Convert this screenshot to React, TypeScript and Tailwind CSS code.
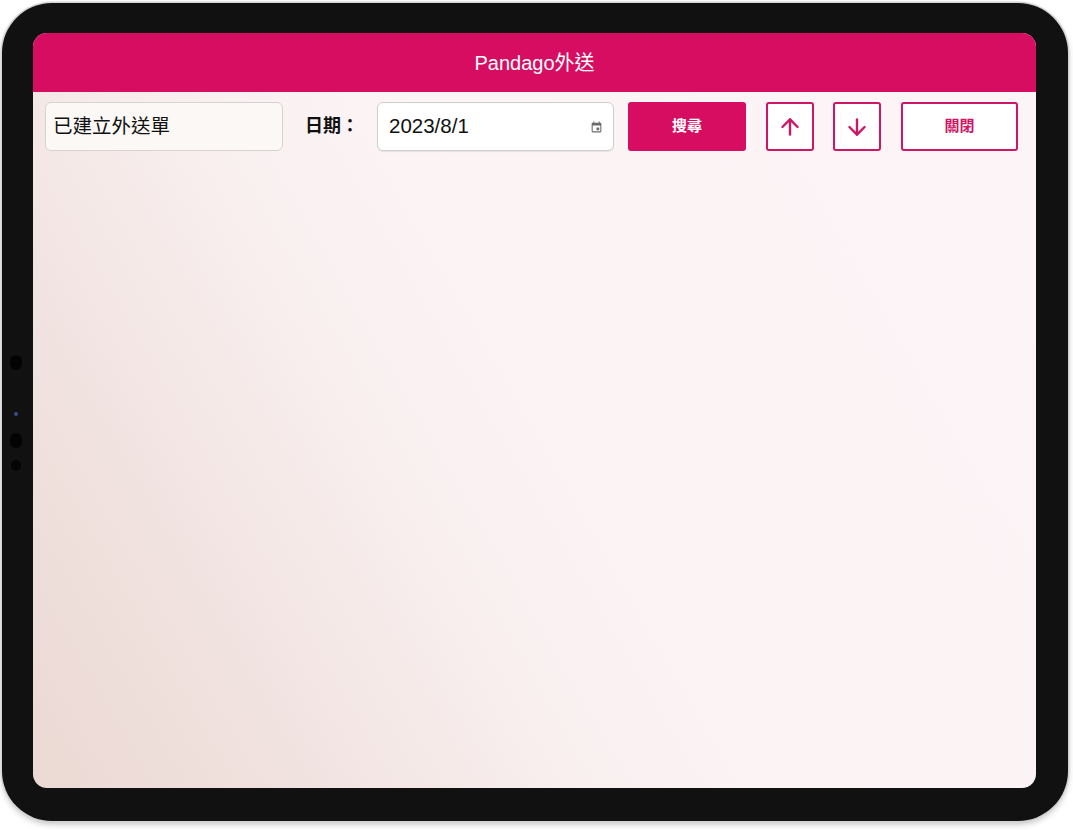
import { ArrowUp, ArrowDown } from "lucide-react";

// Material-ish "event" glyph used by the native date picker
const CalendarIcon = () => (
  <svg width="13" height="14" viewBox="0 0 24 24" fill="#6b6b6b">
    <path d="M19 4h-1V2h-2v2H8V2H6v2H5c-1.11 0-2 .9-2 2v14a2 2 0 0 0 2 2h14c1.1 0 2-.9 2-2V6c0-1.1-.9-2-2-2zm0 16H5V9h14v11z" />
    <rect x="12" y="13" width="5" height="5" />
  </svg>
);

export default function App() {
  return (
    <div
      className="relative w-[1073px] h-[830px] bg-white overflow-hidden"
      style={{ fontFamily: '"Liberation Sans", "Noto Sans CJK TC", sans-serif' }}
    >
      {/* Device frame */}
      <div className="relative ml-[2px] mt-[3px] w-[1066px] h-[818px] rounded-[50px] bg-[#111111] pl-[31px] pt-[30px] pr-[32px] pb-[33px] shadow-[0_0_0_1.5px_#d4d4d4,0_3px_6px_rgba(0,0,0,0.25)]">
        {/* side sensors */}
        <div className="absolute left-[8px] top-[352px] w-[12px] h-[15px] rounded-full bg-[#030303]" />
        <div className="absolute left-[12px] top-[409px] w-[4px] h-[4px] rounded-full bg-[#3a4a8a]" />
        <div className="absolute left-[8px] top-[430px] w-[12px] h-[15px] rounded-full bg-[#030303]" />
        <div className="absolute left-[9px] top-[457px] w-[10px] h-[11px] rounded-full bg-[#050505]" />

        {/* Screen */}
        <div className="flex flex-col w-full h-full rounded-[14px] overflow-hidden bg-[linear-gradient(60deg,#ebd9d3_0%,#f1e3e0_20%,#f8eeee_36%,#fcf3f5_50%,#fdf4f7_100%)]">
          <div className="h-[59px] shrink-0 flex items-center justify-center bg-[#d60d61] text-white text-[20px]">
            Pandago外送
          </div>

          <div className="flex items-center pt-[10px] pl-[12px]">
            <div className="w-[238px] h-[49px] flex items-center pl-[7px] rounded-[6px] border border-[#d6d2d0] bg-[#fbf8f6] text-[19.5px] text-[#111]">
              已建立外送單
            </div>
            <div className="ml-[22px] text-[18px] font-bold text-[#111]">日期：</div>
            <div className="ml-[18px] w-[237px] h-[49px] flex items-center justify-between pl-[11px] pr-[10px] rounded-[6px] border border-[#cfcfcf] bg-white text-[20.5px] text-[#111] shadow-[0_1px_1px_rgba(0,0,0,0.08)]">
              <span>2023/8/1</span>
              <CalendarIcon />
            </div>
            <button className="ml-[14px] w-[118px] h-[49px] rounded-[3px] bg-[#d60d61] text-white text-[15px] font-bold">
              搜尋
            </button>
            <button className="ml-[20px] w-[48px] h-[49px] flex items-center justify-center rounded-[3px] border-2 border-[#cf1664] bg-white text-[#cf1664]">
              <ArrowUp size={26} strokeWidth={2.2} />
            </button>
            <button className="ml-[19px] w-[48px] h-[49px] flex items-center justify-center rounded-[3px] border-2 border-[#cf1664] bg-white text-[#cf1664]">
              <ArrowDown size={26} strokeWidth={2.2} />
            </button>
            <button className="ml-[20px] w-[117px] h-[49px] rounded-[3px] border-2 border-[#cf1664] bg-white text-[#cf1664] text-[15px] font-bold">
              關閉
            </button>
          </div>
        </div>
      </div>
    </div>
  );
}
